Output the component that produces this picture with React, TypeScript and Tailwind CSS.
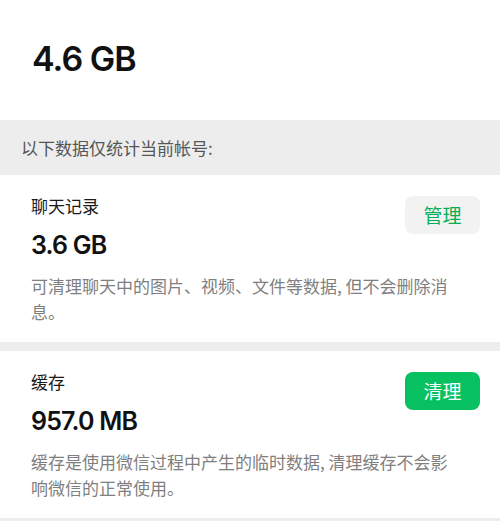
const cjk = "font-['Noto_Sans_CJK_SC','Noto_Sans',sans-serif]";
const num = "font-['Inter','Noto_Sans_CJK_SC',sans-serif]";

interface StorageItem {
  title: string;
  size: string;
  desc: string;
  action: string;
  primary: boolean;
}

const items: StorageItem[] = [
  {
    title: "聊天记录",
    size: "3.6 GB",
    desc: "可清理聊天中的图片、视频、文件等数据, 但不会删除消息。",
    action: "管理",
    primary: false,
  },
  {
    title: "缓存",
    size: "957.0 MB",
    desc: "缓存是使用微信过程中产生的临时数据, 清理缓存不会影响微信的正常使用。",
    action: "清理",
    primary: true,
  },
];

function StorageCard({ item }: { item: StorageItem }) {
  return (
    <div className="bg-white pl-[31px] pr-[20px] pt-[19px] pb-[17px]">
      <div className="flex items-start justify-between">
        <div>
          <p className={`${cjk} text-[17px] leading-[24px] text-[#1a1a1a]`}>{item.title}</p>
          <p className={`${num} mt-[12px] text-[25px] font-semibold leading-[30px] tracking-[-0.8px] text-[#111]`}>
            {item.size}
          </p>
        </div>
        <button
          className={`${cjk} mt-[2px] h-[38px] w-[75px] rounded-[8px] text-[19px] font-normal ${
            item.primary ? "bg-[#07c160] text-white" : "bg-[#f2f2f2] text-[#06ae56]"
          }`}
        >
          {item.action}
        </button>
      </div>
      <p className={`${cjk} mt-[13px] pr-[20px] text-[17px] leading-[26px] text-[#7f7f7f]`}>{item.desc}</p>
    </div>
  );
}

export default function App() {
  return (
    <div className="h-[521px] w-[500px] overflow-hidden bg-[#ededed]">
      <div className="h-[120px] bg-white pl-[32px] pt-[38px]">
        <p className={`${num} text-[34px] font-semibold leading-[42px] tracking-[-1px] text-[#111]`}>4.6 GB</p>
      </div>
      <div className="flex h-[55px] items-center pl-[21px]">
        <p className={`${cjk} text-[17px] text-[#555]`}>以下数据仅统计当前帐号:</p>
      </div>
      <div className="flex flex-col gap-[9px]">
        {items.map((it) => (
          <StorageCard key={it.title} item={it} />
        ))}
      </div>
    </div>
  );
}
